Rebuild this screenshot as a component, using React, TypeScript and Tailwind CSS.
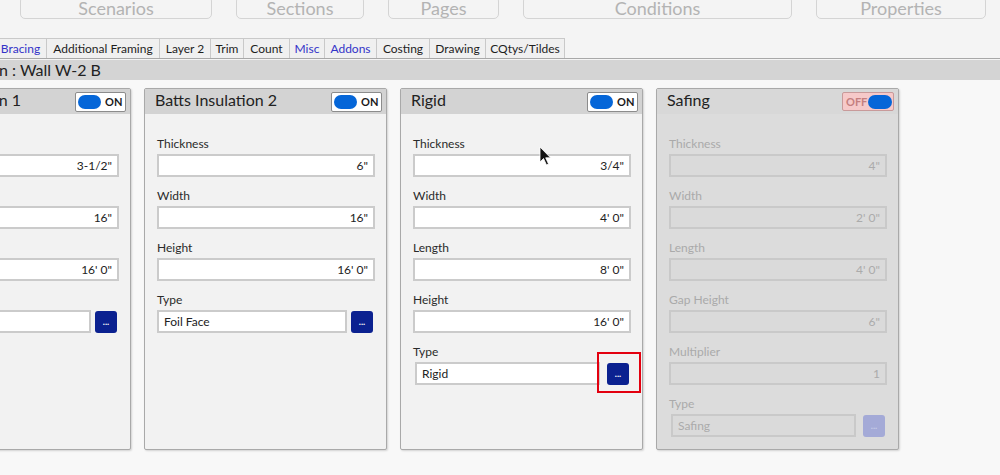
const font = { fontFamily: 'Lato, "Open Sans", sans-serif' };

type Field = { label: string; value: string };

type CardProps = {
  title: string;
  on: boolean;
  fields: Field[];
  typeValue: string;
  typeInset?: boolean;
  highlight?: boolean;
};

function Toggle({ on }: { on: boolean }) {
  if (on) {
    return (
      <div className="flex h-[20px] w-[51px] items-center gap-[4px] rounded-[2px] border border-[#8c8c8c] bg-white pl-[2px]">
        <div className="h-[14px] w-[23px] rounded-full bg-[#0566d8]" />
        <span className="text-[11px] font-bold leading-none text-[#1a1a1a]">ON</span>
      </div>
    );
  }
  return (
    <div className="flex h-[19px] w-[52px] items-center justify-between rounded-[2px] border border-[#c89a9a] bg-[#f6c9c9] pl-[3px] pr-[1px]">
      <span className="text-[11px] font-bold leading-none text-[#c47f7f]">OFF</span>
      <div className="h-[14px] w-[24px] rounded-full bg-[#0566d8]" />
    </div>
  );
}

function Card({ title, on, fields, typeValue, typeInset, highlight }: CardProps) {
  const lbl = on ? 'text-[#2a2a2a]' : 'text-[#aaaaaa]';
  const inp = on
    ? 'bg-white border-[#cbcbcb] text-[#222]'
    : 'bg-[#dadada] border-[#c9c9c9] text-[#ababab]';
  return (
    <div
      className={`flex h-[362px] w-[243px] shrink-0 flex-col rounded-[2px] border border-[#a9a9a9] shadow-[1px_1px_2px_rgba(0,0,0,0.15)] ${
        on ? 'bg-[#f2f2f2]' : 'bg-[#dcdcdc]'
      }`}
    >
      <div
        className={`flex h-[25px] items-center justify-between pl-[10px] pr-[4px] ${
          on ? 'bg-[#d3d3d3]' : 'bg-[#d8d8d8]'
        }`}
      >
        <span className="-mt-[3px] text-[16px] text-[#222]">{title}</span>
        <Toggle on={on} />
      </div>
      <div className="flex flex-col pl-[12px] pr-[11px] pt-[22px]">
        {fields.map((f) => (
          <div key={f.label} className="mb-[11px]">
            <div className={`mb-[2px] h-[16px] text-[12px] leading-[16px] ${lbl}`}>{f.label}</div>
            <div
              className={`flex h-[23px] items-center justify-end border-2 pr-[5px] text-[12px] ${inp}`}
            >
              {f.value}
            </div>
          </div>
        ))}
        <div>
          <div className={`mb-[2px] h-[16px] text-[12px] leading-[16px] ${lbl}`}>Type</div>
          <div className="flex items-center">
            <div
              className={`flex h-[23px] flex-1 items-center border-2 pl-[5px] text-[12px] ${inp} ${
                typeInset ? 'ml-[2px]' : ''
              }`}
            >
              {typeValue}
            </div>
            <div className={`relative ${typeInset ? 'ml-[7px] mr-[2px]' : 'ml-[4px] mr-[2px]'}`}>
              <div
                className={`flex h-[22px] w-[22px] items-center justify-center rounded-[3px] text-[9px] font-bold leading-none ${
                  on ? 'bg-[#0b2190] text-white' : 'bg-[#a4aad7] text-[#c7cbe8]'
                }`}
              >
                ...
              </div>
              {highlight && (
                <div className="absolute -left-[10px] -right-[12px] -top-[11px] -bottom-[8px] border-2 border-[#e3000f]" />
              )}
            </div>
          </div>
        </div>
      </div>
    </div>
  );
}

const tabs = [
  { name: 'Bracing', w: 'w-[52px]', blue: true },
  { name: 'Additional Framing', w: 'w-[113px]' },
  { name: 'Layer 2', w: 'w-[51px]' },
  { name: 'Trim', w: 'w-[33px]' },
  { name: 'Count', w: 'w-[46px]' },
  { name: 'Misc', w: 'w-[35px]', blue: true },
  { name: 'Addons', w: 'w-[52px]', blue: true },
  { name: 'Costing', w: 'w-[53px]' },
  { name: 'Drawing', w: 'w-[56px]' },
  { name: 'CQtys/Tildes', w: 'w-[79px]' },
];

const topButtons = [
  { name: 'Scenarios', w: 'w-[192px]' },
  { name: 'Sections', w: 'w-[128px]' },
  { name: 'Pages', w: 'w-[111px]' },
  { name: 'Conditions', w: 'w-[269px]' },
  { name: 'Properties', w: 'w-[170px]' },
];

export default function App() {
  return (
    <div className="relative h-[475px] w-[1000px] overflow-hidden bg-[#f4f4f4]" style={font}>
      {/* top navigation buttons */}
      <div className="flex h-[19px] gap-[24px] pl-[20px]">
        {topButtons.map((b) => (
          <div
            key={b.name}
            className={`-mt-[4px] flex h-[23px] items-center justify-center rounded-[5px] border border-[#d4d4d4] text-[18px] leading-none text-[#b3b3b3] ${b.w}`}
          >
            {b.name}
          </div>
        ))}
      </div>

      {/* tabs */}
      <div className="mt-[19px] flex h-[21px] border-b border-[#a8a8a8] -ml-[5px]">
        {tabs.map((t) => (
          <div
            key={t.name}
            className={`flex h-[20px] items-center justify-center border border-b-0 border-l-0 border-[#c9c9c9] bg-[#f0f0f0] text-[12px] ${t.w} ${
              t.blue ? 'text-[#3333c8]' : 'text-[#1e1e1e]'
            }`}
          >
            {t.name}
          </div>
        ))}
      </div>

      {/* section bar */}
      <div className="mt-[1px] flex h-[20px] items-center bg-[#d4d4d4] text-[16px] text-[#222]">
        <span className="-ml-[1px]">n : Wall W-2 B</span>
      </div>

      {/* cards */}
      <div className="h-[395px] bg-[#f8f8f8] pt-[8px]">
        <div className="-ml-[112px] flex gap-[13px]">
          <Card
            title="Batts Insulation 1"
            on
            fields={[
              { label: 'Thickness', value: '3-1/2"' },
              { label: 'Width', value: '16"' },
              { label: 'Height', value: `16' 0"` },
            ]}
            typeValue=""
          />
          <Card
            title="Batts Insulation 2"
            on
            fields={[
              { label: 'Thickness', value: '6"' },
              { label: 'Width', value: '16"' },
              { label: 'Height', value: `16' 0"` },
            ]}
            typeValue="Foil Face"
          />
          <Card
            title="Rigid"
            on
            fields={[
              { label: 'Thickness', value: '3/4"' },
              { label: 'Width', value: `4' 0"` },
              { label: 'Length', value: `8' 0"` },
              { label: 'Height', value: `16' 0"` },
            ]}
            typeValue="Rigid"
            typeInset
            highlight
          />
          <Card
            title="Safing"
            on={false}
            fields={[
              { label: 'Thickness', value: '4"' },
              { label: 'Width', value: `2' 0"` },
              { label: 'Length', value: `4' 0"` },
              { label: 'Gap Height', value: '6"' },
              { label: 'Multiplier', value: '1' },
            ]}
            typeValue="Safing"
            typeInset
          />
        </div>
      </div>

      {/* mouse cursor */}
      <svg
        className="absolute left-[539px] top-[146px]"
        width="14"
        height="21"
        viewBox="0 0 14 21"
      >
        <path d="M1 1 L1 16 L4.5 12.5 L7.5 19 L9.5 18 L6.7 11.8 L11.5 11.8 Z" fill="#111" stroke="#fff" strokeWidth="0.8" />
      </svg>
    </div>
  );
}
